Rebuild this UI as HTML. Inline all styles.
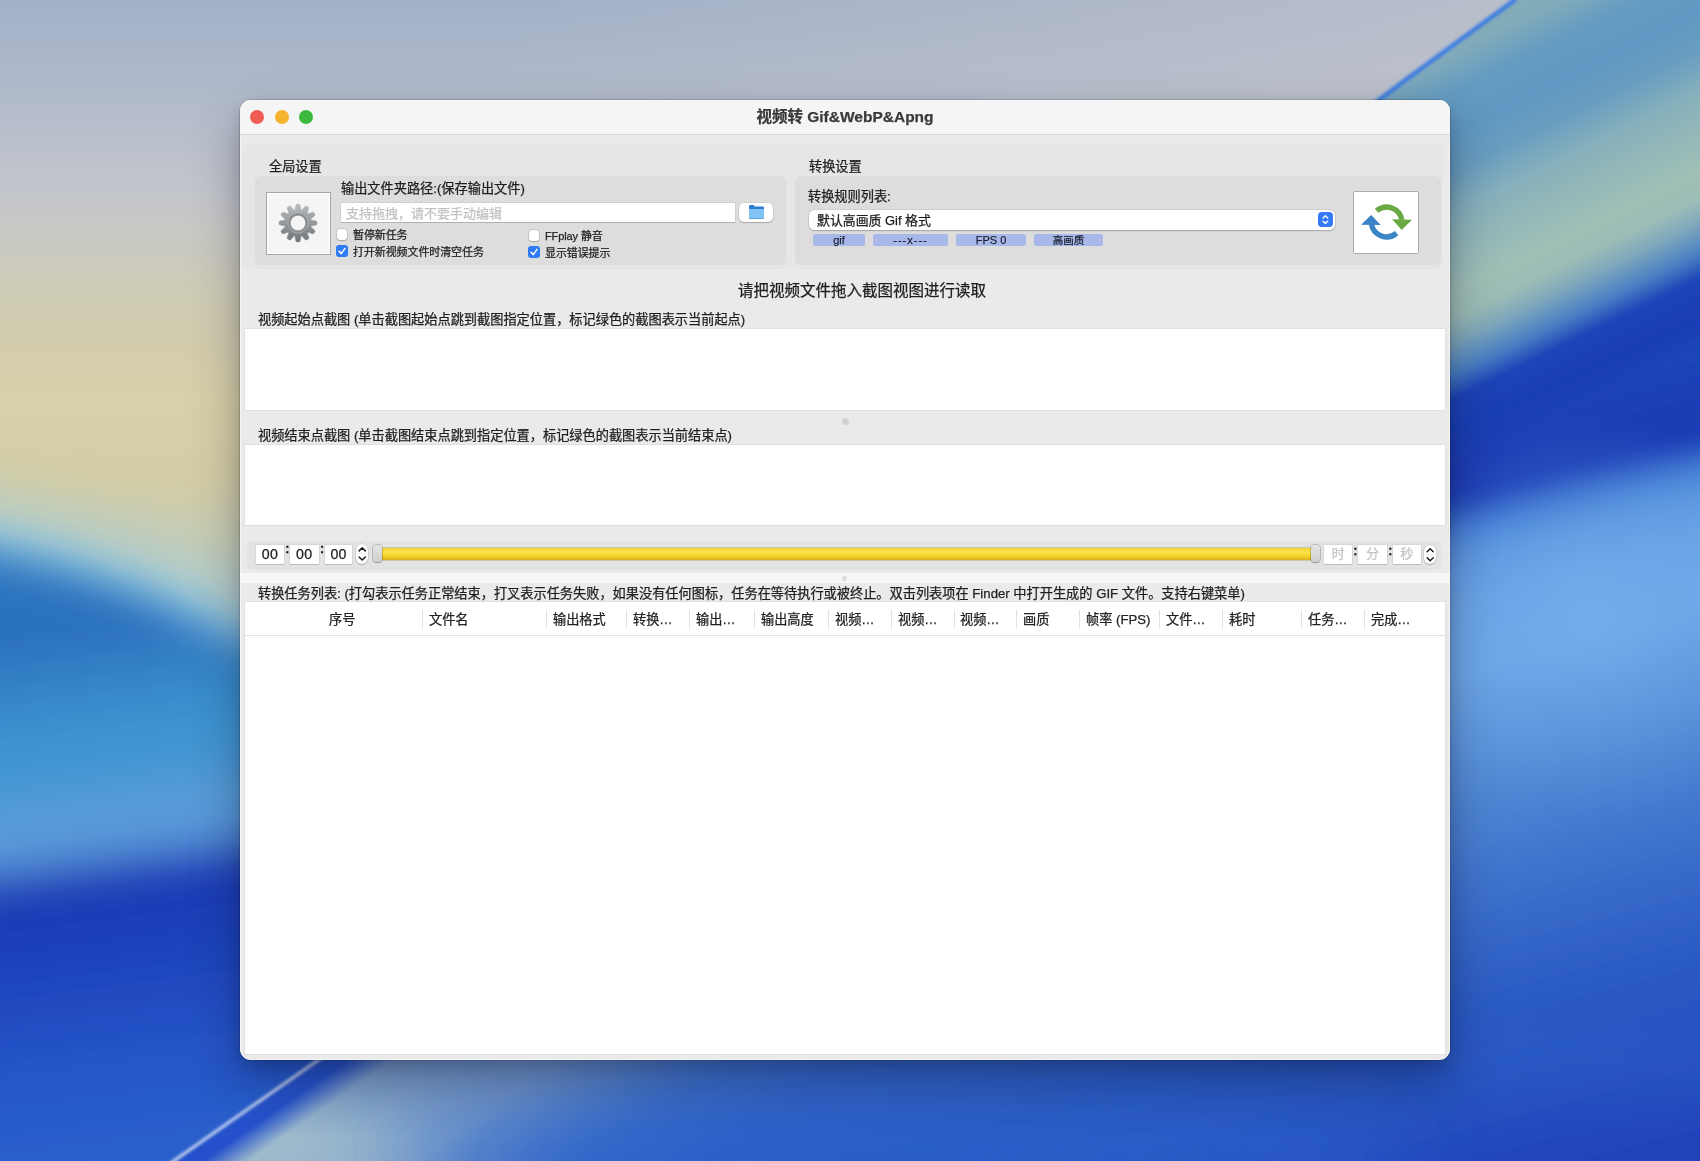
<!DOCTYPE html>
<html lang="zh-CN">
<head>
<meta charset="utf-8">
<title>视频转 Gif&amp;WebP&amp;Apng</title>
<style>
*{box-sizing:border-box;margin:0;padding:0}
html,body{width:1700px;height:1161px;overflow:hidden;background:#2a5cc8}
body{position:relative;font-family:"Liberation Sans","Noto Sans CJK SC",sans-serif;color:#1d1d1d;-webkit-font-smoothing:antialiased;-webkit-text-stroke:.25px}
#wall{position:absolute;left:0;top:0;width:1700px;height:1161px;display:block}
.abs{position:absolute}
#win{position:absolute;left:240px;top:100px;width:1210px;height:959.6px;border-radius:11px;background:#eaeaea;overflow:hidden;will-change:transform;
 box-shadow:inset 0 0 0 1px rgba(255,255,255,.5),0 0 0 .5px rgba(0,0,0,.28),0 22px 50px rgba(0,0,30,.32),0 6px 16px rgba(0,0,30,.14)}
#tbar{position:absolute;left:0;top:0;width:1210px;height:35px;background:#f5f5f5;border-bottom:1px solid #d9d9d9}
.tl{position:absolute;top:10px;width:14px;height:14px;border-radius:50%}
#title{position:absolute;left:0;top:0;width:1210px;height:35px;line-height:34px;text-align:center;font-size:15.5px;font-weight:bold;color:#3a3a3a}
.t13{position:absolute;font-size:13.2px;line-height:16px;margin-top:1.2px;white-space:nowrap;color:#1f1f1f}
.t11{position:absolute;font-size:11px;line-height:14px;margin-top:1px;letter-spacing:-.1px;white-space:nowrap;color:#1f1f1f}
.grp{position:absolute;border-radius:6px}
.cb{position:absolute;width:12px;height:12px;border-radius:3px;background:#fff;box-shadow:0 0 0 .5px rgba(0,0,0,.18),0 .5px 1px rgba(0,0,0,.18)}
.cb.on{background:#2f7bf6;box-shadow:none}
.cb svg{position:absolute;left:0;top:0}
.tag{position:absolute;top:134px;height:12px;border-radius:2px;background:#a8b8e8;font-size:11px;line-height:12px;text-align:center;color:#1c2236}
.white{position:absolute;background:#fff}
.tf{position:absolute;top:444.5px;height:19.5px;background:#fff;font-size:14.2px;line-height:18.4px;letter-spacing:.3px;text-align:center;color:#222;box-shadow:0 0 0 .5px rgba(0,0,0,.10),0 1px 0 rgba(0,0,0,.12)}
.tf.ph{color:#c4c4c4;font-size:13px}
.colon{position:absolute;top:439.5px;font-size:13.5px;line-height:18px;color:#111;-webkit-text-stroke:.7px #111}
.stp{position:absolute;top:444.2px;width:12.4px;height:19.4px;border-radius:6px;background:#fff;box-shadow:0 0 0 .5px rgba(0,0,0,.14),0 1px 1px rgba(0,0,0,.18)}
.knob{position:absolute;top:444.6px;width:9.6px;height:17px;border-radius:3px;background:linear-gradient(#e4e4e4,#cfcfcf);box-shadow:0 0 0 .5px rgba(0,0,0,.35),0 1px 1px rgba(0,0,0,.2)}
.th{position:absolute;top:511px;font-size:13.2px;line-height:18px;white-space:nowrap;color:#222}
.sep{position:absolute;top:510px;width:1px;height:19px;background:#e2e2e2}
</style>
</head>
<body>
<svg id="wall" width="1700" height="1161" viewBox="0 0 1700 1161">
<defs>
 <linearGradient id="sky" gradientUnits="userSpaceOnUse" x1="0" y1="0" x2="0" y2="600">
  <stop offset="0" stop-color="#a2b0c7"/>
  <stop offset=".17" stop-color="#b2bbcb"/>
  <stop offset=".33" stop-color="#c4c6cb"/>
  <stop offset=".42" stop-color="#cbcac0"/>
  <stop offset=".5" stop-color="#cfccb4"/>
  <stop offset=".58" stop-color="#d3cdad"/>
  <stop offset=".67" stop-color="#d8d0a8"/>
  <stop offset=".8" stop-color="#d3cda6"/>
  <stop offset="1" stop-color="#bccbc0"/>
 </linearGradient>
 <linearGradient id="skyx" gradientUnits="userSpaceOnUse" x1="500" y1="0" x2="1500" y2="0">
  <stop offset="0" stop-color="#c6c6cc" stop-opacity="0"/>
  <stop offset="1" stop-color="#c6c6cc" stop-opacity=".6"/>
 </linearGradient>
 <linearGradient id="lblue" gradientUnits="userSpaceOnUse" x1="0" y1="530" x2="82" y2="1161">
  <stop offset="0" stop-color="#2d76c0"/>
  <stop offset=".06" stop-color="#2d75bf"/>
  <stop offset=".18" stop-color="#2c70bd"/>
  <stop offset=".25" stop-color="#3483c8"/>
  <stop offset=".33" stop-color="#3c93d0"/>
  <stop offset=".40" stop-color="#4497d3"/>
  <stop offset=".45" stop-color="#589bd8"/>
  <stop offset=".50" stop-color="#5c9cda"/>
  <stop offset=".535" stop-color="#4a80d0"/>
  <stop offset=".562" stop-color="#1a3ab4"/>
  <stop offset=".63" stop-color="#1b3eb8"/>
  <stop offset=".745" stop-color="#2049c0"/>
  <stop offset=".84" stop-color="#2555c8"/>
  <stop offset="1" stop-color="#2a60cc"/>
 </linearGradient>
 <linearGradient id="sheetA" gradientUnits="userSpaceOnUse" x1="1450" y1="0" x2="1978" y2="1078">
  <stop offset="0" stop-color="#86aeb8"/>
  <stop offset=".04" stop-color="#82abb9"/>
  <stop offset=".07" stop-color="#659cc2"/>
  <stop offset=".10" stop-color="#5f98c2"/>
  <stop offset=".13" stop-color="#6a9ec0"/>
  <stop offset=".16" stop-color="#86b0bc"/>
  <stop offset=".19" stop-color="#94b8b8"/>
  <stop offset=".22" stop-color="#a0c0b6"/>
  <stop offset=".24" stop-color="#9cbcb6"/>
  <stop offset=".258" stop-color="#7fa8bc"/>
  <stop offset=".281" stop-color="#4a80c4"/>
  <stop offset=".30" stop-color="#1d44b8"/>
  <stop offset=".34" stop-color="#1a3cb4"/>
  <stop offset="1" stop-color="#1a3cb4"/>
 </linearGradient>
 <linearGradient id="sheetB" gradientUnits="userSpaceOnUse" x1="1450" y1="400" x2="1650" y2="1174">
  <stop offset="0" stop-color="#1f48bb"/>
  <stop offset=".06" stop-color="#1c40b6"/>
  <stop offset=".11" stop-color="#1a3ab4"/>
  <stop offset=".128" stop-color="#1d40b8"/>
  <stop offset=".158" stop-color="#3f78d2"/>
  <stop offset=".19" stop-color="#5a94de"/>
  <stop offset=".245" stop-color="#6aa4e6"/>
  <stop offset=".33" stop-color="#6ea8e7"/>
  <stop offset=".485" stop-color="#5088d4"/>
  <stop offset=".61" stop-color="#3c70cc"/>
  <stop offset=".735" stop-color="#2c5cc4"/>
  <stop offset=".86" stop-color="#2650c0"/>
  <stop offset=".97" stop-color="#2042ba"/>
 </linearGradient>
 <linearGradient id="band" gradientUnits="userSpaceOnUse" x1="174" y1="1161" x2="363" y2="1431">
  <stop offset="0" stop-color="#2450cc"/>
  <stop offset=".05" stop-color="#2450cc"/>
  <stop offset=".13" stop-color="#a2bdcc" stop-opacity=".95"/>
  <stop offset=".42" stop-color="#9bb8cc" stop-opacity=".92"/>
  <stop offset=".56" stop-color="#84a8cc" stop-opacity=".7"/>
  <stop offset=".72" stop-color="#6a96cc" stop-opacity=".28"/>
  <stop offset=".92" stop-color="#6a96cc" stop-opacity="0"/>
 </linearGradient>
 <linearGradient id="bandfade" gradientUnits="userSpaceOnUse" x1="0" y1="1000" x2="0" y2="1140">
  <stop offset="0" stop-color="#2d5ec6" stop-opacity="0"/>
  <stop offset=".42" stop-color="#2d5ec6" stop-opacity=".36"/>
  <stop offset="1" stop-color="#2d5ec6" stop-opacity="0"/>
 </linearGradient>
 <radialGradient id="glow" gradientUnits="userSpaceOnUse" cx="1590" cy="615" r="200">
  <stop offset="0" stop-color="#7ab0ec" stop-opacity=".6"/>
  <stop offset=".5" stop-color="#72aae8" stop-opacity=".25"/>
  <stop offset="1" stop-color="#6aa4e6" stop-opacity="0"/>
 </radialGradient>
 <filter id="b40" x="-30%" y="-30%" width="160%" height="160%"><feGaussianBlur stdDeviation="40"/></filter>
 <filter id="b35" x="-30%" y="-30%" width="160%" height="160%"><feGaussianBlur stdDeviation="34"/></filter>
 <filter id="b20" x="-30%" y="-30%" width="160%" height="160%"><feGaussianBlur stdDeviation="19"/></filter>
 <filter id="b10" x="-30%" y="-30%" width="160%" height="160%"><feGaussianBlur stdDeviation="10"/></filter>
 <filter id="b2" x="-10%" y="-10%" width="120%" height="120%"><feGaussianBlur stdDeviation="1.6"/></filter>
 <clipPath id="sheetclip"><path d="M174,1161 L318,1060 L1378,100 L1400,84 L1516,-1 L1700,-1 L1700,1161 Z"/></clipPath>
</defs>
<rect width="1700" height="1161" fill="url(#sky)"/>
<rect width="1700" height="420" fill="url(#skyx)"/>
<!-- glow above left blue mass -->
<path filter="url(#b35)" d="M-200,492 C-40,492 120,532 270,617 C420,702 600,707 900,627 L900,1400 L-200,1400 Z" fill="#a9ced6"/>
<path filter="url(#b20)" d="M-200,516 C-40,516 115,554 262,639 C412,724 600,727 900,650 L900,1400 L-200,1400 Z" fill="#84bfde"/>
<!-- left blue mass -->
<path filter="url(#b20)" d="M-200,534 C-40,534 110,571 260,656 C410,741 600,739 900,669 L900,1400 L-200,1400 Z" fill="url(#lblue)"/>
<!-- sheet -->
<g clip-path="url(#sheetclip)">
 <rect x="100" y="-50" width="1700" height="1300" fill="url(#sheetA)"/>
 <path filter="url(#b10)" d="M-100,900 L1100,560 L1450,445 L1700,335 L1900,250 L1900,1400 L-100,1400 Z" fill="url(#sheetB)"/>
 <rect x="1200" y="300" width="600" height="700" fill="url(#glow)"/>
 <rect x="100" y="1000" width="800" height="200" fill="url(#band)"/>
 <rect x="0" y="1000" width="1700" height="161" fill="url(#bandfade)"/>
 <ellipse filter="url(#b40)" cx="900" cy="1150" rx="520" ry="55" fill="#2b5ec8" opacity=".85"/>
</g>
<!-- sheet bright edge -->
<path filter="url(#b2)" d="M1358,116 L1400,84 L1516,-1" fill="none" stroke="#3d7de2" stroke-width="4.5"/>
<path filter="url(#b2)" d="M168,1165 L324,1056" fill="none" stroke="#c9d7f3" stroke-width="3"/>
</svg>

<div id="win">
 <div id="tbar"></div>
 <div class="tl" style="left:10.4px;background:#ee5c54"></div>
 <div class="tl" style="left:34.5px;background:#f5b32f"></div>
 <div class="tl" style="left:58.5px;background:#3db83f"></div>
 <div id="title">视频转 Gif&amp;WebP&amp;Apng</div>

 <!-- outer group -->
 <div class="grp" style="left:3px;top:45px;width:1200px;height:124px;background:#e6e6e6"></div>
 <div class="t13" style="left:29px;top:58px">全局设置</div>
 <div class="t13" style="left:569px;top:58px">转换设置</div>
 <div class="grp" style="left:15px;top:76px;width:531px;height:89px;background:#dddddd"></div>
 <div class="grp" style="left:555px;top:76px;width:646px;height:89px;background:#dddddd"></div>

 <!-- gear button -->
 <div class="abs" style="left:26px;top:92px;width:65px;height:63px;background:#f5f5f5;border:1px solid #a6a6a6;box-shadow:inset 0 0 0 1px #fff"></div>
 <svg class="abs" style="left:37.2px;top:102.1px" width="42" height="42" viewBox="-21 -21 42 42">
  <defs><linearGradient id="gg" gradientUnits="userSpaceOnUse" x1="0" y1="-20" x2="0" y2="20"><stop offset="0" stop-color="#bcbfc1"/><stop offset=".45" stop-color="#999c9f"/><stop offset="1" stop-color="#727578"/></linearGradient>
  <linearGradient id="gg2" gradientUnits="userSpaceOnUse" x1="0" y1="-11" x2="0" y2="11"><stop offset="0" stop-color="#8a8d90"/><stop offset="1" stop-color="#8d9093"/></linearGradient></defs>
  <path d="M-3.30,-12.00 L-2.10,-18.00 L-1.20,-19.00 L1.20,-19.00 L2.10,-18.00 L3.30,-12.00Z M3.14,-12.04 L7.18,-16.64 L8.46,-17.05 L10.54,-15.85 L10.82,-14.54 L8.86,-8.74Z M8.74,-8.86 L14.54,-10.82 L15.85,-10.54 L17.05,-8.46 L16.64,-7.18 L12.04,-3.14Z M12.00,-3.30 L18.00,-2.10 L19.00,-1.20 L19.00,1.20 L18.00,2.10 L12.00,3.30Z M12.04,3.14 L16.64,7.18 L17.05,8.46 L15.85,10.54 L14.54,10.82 L8.74,8.86Z M8.86,8.74 L10.82,14.54 L10.54,15.85 L8.46,17.05 L7.18,16.64 L3.14,12.04Z M3.30,12.00 L2.10,18.00 L1.20,19.00 L-1.20,19.00 L-2.10,18.00 L-3.30,12.00Z M-3.14,12.04 L-7.18,16.64 L-8.46,17.05 L-10.54,15.85 L-10.82,14.54 L-8.86,8.74Z M-8.74,8.86 L-14.54,10.82 L-15.85,10.54 L-17.05,8.46 L-16.64,7.18 L-12.04,3.14Z M-12.00,3.30 L-18.00,2.10 L-19.00,1.20 L-19.00,-1.20 L-18.00,-2.10 L-12.00,-3.30Z M-12.04,-3.14 L-16.64,-7.18 L-17.05,-8.46 L-15.85,-10.54 L-14.54,-10.82 L-8.74,-8.86Z M-8.86,-8.74 L-10.82,-14.54 L-10.54,-15.85 L-8.46,-17.05 L-7.18,-16.64 L-3.14,-12.04Z " fill="url(#gg)" stroke="url(#gg)" stroke-width=".5" stroke-linejoin="round"/>
  <circle r="13.3" fill="url(#gg)"/>
  <circle r="10.2" fill="url(#gg2)" stroke="#b9bcbe" stroke-width=".6"/>
  <circle r="7.7" fill="#f4f4f4" stroke="#7b7e81" stroke-width=".5"/>
 </svg>

 <div class="t13" style="left:101px;top:80px">输出文件夹路径:(保存输出文件)</div>
 <div class="abs" style="left:101px;top:103px;width:394px;height:19px;background:#fff;box-shadow:0 0 0 .5px rgba(0,0,0,.12),0 1px 0 rgba(0,0,0,.14)"></div>
 <div class="abs" style="left:106px;top:105px;font-size:13px;line-height:17px;color:#c2c2c2;white-space:nowrap">支持拖拽，请不要手动编辑</div>
 <!-- folder button -->
 <div class="abs" style="left:499px;top:103px;width:34px;height:19px;border-radius:5px;background:#fff;box-shadow:0 0 0 .5px rgba(0,0,0,.12),0 1px 1px rgba(0,0,0,.18)"></div>
 <svg class="abs" style="left:508.9px;top:105.1px" width="15" height="14.3" viewBox="0 0 15 14.3">
  <path d="M0,1.2 Q0,0 1.2,0 H4.6 L5.9,1.4 H13.8 Q15,1.4 15,2.6 V13.1 Q15,14.3 13.8,14.3 H1.2 Q0,14.3 0,13.1 Z" fill="#2b7ecf"/>
  <path d="M0,3.9 H15 V13.1 Q15,14.3 13.8,14.3 H1.2 Q0,14.3 0,13.1 Z" fill="#83c4f7"/>
  <path d="M0,12.9 H15 V13.1 Q15,14.3 13.8,14.3 H1.2 Q0,14.3 0,13.1 Z" fill="#5ea8e6"/>
 </svg>

 <!-- checkboxes -->
 <div class="cb" style="left:96.7px;top:129.4px;width:10.8px;height:10.8px"></div>
 <div class="t11" style="left:113px;top:127px">暂停新任务</div>
 <div class="cb on" style="left:96px;top:145px"><svg width="12" height="12" viewBox="0 0 12 12"><path d="M3 6.2 L5.2 8.6 L9 3.4" fill="none" stroke="#fff" stroke-width="1.5" stroke-linecap="round" stroke-linejoin="round"/></svg></div>
 <div class="t11" style="left:113px;top:144px">打开新视频文件时清空任务</div>
 <div class="cb" style="left:288.7px;top:130.4px;width:10.8px;height:10.8px"></div>
 <div class="t11" style="left:305px;top:128px">FFplay 静音</div>
 <div class="cb on" style="left:288px;top:146px"><svg width="12" height="12" viewBox="0 0 12 12"><path d="M3 6.2 L5.2 8.6 L9 3.4" fill="none" stroke="#fff" stroke-width="1.5" stroke-linecap="round" stroke-linejoin="round"/></svg></div>
 <div class="t11" style="left:305px;top:145px">显示错误提示</div>

 <!-- right group -->
 <div class="t13" style="left:568px;top:88px">转换规则列表:</div>
 <div class="abs" style="left:569px;top:109.7px;width:526.2px;height:20px;border-radius:5.5px;background:#fff;box-shadow:0 0 0 .5px rgba(0,0,0,.12),0 1px 1.5px rgba(0,0,0,.22)"></div>
 <div class="t13" style="left:577px;top:111px;line-height:17px;font-size:12.9px">默认高画质 Gif 格式</div>
 <div class="abs" style="left:1078px;top:112.3px;width:14.7px;height:14.9px;border-radius:3.8px;background:#3579f6"></div>
 <svg class="abs" style="left:1078px;top:112.3px" width="14.7" height="14.9" viewBox="0 0 14.7 14.9"><path d="M5.1 6 L7.4 3.8 L9.7 6 M5.1 9.2 L7.4 11.4 L9.7 9.2" fill="none" stroke="#fff" stroke-width="1.35" stroke-linecap="round" stroke-linejoin="round"/></svg>
 <div class="tag" style="left:573px;width:52px">gif</div>
 <div class="tag" style="left:633px;width:75px;letter-spacing:1px">---x---</div>
 <div class="tag" style="left:716px;width:70px">FPS 0</div>
 <div class="tag" style="left:794px;width:69px;font-size:10.5px">高画质</div>

 <!-- refresh button -->
 <div class="abs" style="left:1113px;top:91px;width:65.5px;height:62.5px;background:#fff;border:1px solid #aaa;border-radius:1.5px"></div>
 <svg class="abs" style="left:1106px;top:84px" width="80" height="76" viewBox="0 0 1222 1161">
  <path d="M467,410 A235 235 0 0 1 852,548" fill="none" stroke="#6aaa44" stroke-width="82"/>
  <path d="M705,540 L1010,548 L850,702 Z" fill="#6aaa44"/>
  <path d="M773,750 A235 235 0 0 1 388,612" fill="none" stroke="#3b84c6" stroke-width="82"/>
  <path d="M230,622 L530,628 L385,473 Z" fill="#3b84c6"/>
 </svg>

 <!-- hint -->
 <div class="abs" style="left:0;top:181px;width:1244px;text-align:center;font-size:15.5px;line-height:20px;color:#1f1f1f">请把视频文件拖入截图视图进行读取</div>

 <div class="t13" style="left:18px;top:211px">视频起始点截图 (单击截图起始点跳到截图指定位置，标记绿色的截图表示当前起点)</div>
 <div class="white" style="left:5px;top:229px;width:1200px;height:81px;box-shadow:0 0 0 .5px rgba(0,0,0,.08)"></div>
 <div class="abs" style="left:601.5px;top:317.5px;width:7px;height:7px;border-radius:50%;background:#d2d2d2"></div>
 <div class="t13" style="left:18px;top:327px">视频结束点截图 (单击截图结束点跳到指定位置，标记绿色的截图表示当前结束点)</div>
 <div class="white" style="left:5px;top:345px;width:1200px;height:80px;box-shadow:0 0 0 .5px rgba(0,0,0,.08)"></div>

 <!-- slider row -->
 <div class="grp" style="left:7px;top:441.2px;width:1194px;height:28.8px;background:#e3e3e3"></div>
 <div class="tf" style="left:16px;width:27.8px">00</div>
 <div class="colon" style="left:45.4px">:</div>
 <div class="tf" style="left:49.9px;width:28.7px">00</div>
 <div class="colon" style="left:80.2px">:</div>
 <div class="tf" style="left:84.7px;width:27.8px">00</div>
 <div class="stp" style="left:115.8px"></div>
 <svg class="abs" style="left:115.8px;top:444.2px" width="12.4" height="19.4" viewBox="0 0 12.4 19.4"><path d="M3.1 6.9 L6.2 3.9 L9.3 6.9 M3.1 13 L6.2 16 L9.3 13" fill="none" stroke="#1c1c1c" stroke-width="1.5" stroke-linecap="round" stroke-linejoin="round"/><path d="M.8 9.7 H11.6" stroke="#e4e4e4" stroke-width=".6"/></svg>
 <div class="abs" style="left:137px;top:448px;width:940px;height:12px;border-radius:3px;background:linear-gradient(#f2d436 0%,#fbe34a 35%,#f4cf2a 70%,#d9ae1c 100%);box-shadow:0 0 0 .5px rgba(150,120,0,.55)"></div>
 <div class="knob" style="left:132.7px"></div>
 <div class="knob" style="left:1070.6px"></div>
 <div class="tf ph" style="left:1084.4px;width:27.8px">时</div>
 <div class="colon" style="left:1113.5px;top:442px">:</div>
 <div class="tf ph" style="left:1118.2px;width:28.7px">分</div>
 <div class="colon" style="left:1148.4px;top:442px">:</div>
 <div class="tf ph" style="left:1153px;width:27.8px">秒</div>
 <div class="stp" style="left:1183.6px;top:445px;height:19px"></div>
 <svg class="abs" style="left:1183.6px;top:445px" width="12.4" height="19" viewBox="0 0 12.4 19.4"><path d="M3.1 6.9 L6.2 3.9 L9.3 6.9 M3.1 13 L6.2 16 L9.3 13" fill="none" stroke="#1c1c1c" stroke-width="1.5" stroke-linecap="round" stroke-linejoin="round"/><path d="M.8 9.7 H11.6" stroke="#e4e4e4" stroke-width=".6"/></svg>

 <!-- splitter -->
 <div class="abs" style="left:0;top:473.3px;width:1210px;height:10px;background:#f7f7f7"></div>
 <div class="abs" style="left:602px;top:475.5px;width:5px;height:5px;border-radius:50%;background:#dcdcdc"></div>

 <div class="t13" style="left:18px;top:484.8px">转换任务列表: (打勾表示任务正常结束，打叉表示任务失败，如果没有任何图标，任务在等待执行或被终止。双击列表项在 Finder 中打开生成的 GIF 文件。支持右键菜单)</div>

 <!-- table -->
 <div class="white" style="left:5px;top:502px;width:1200px;height:452px;box-shadow:0 0 0 .5px rgba(0,0,0,.08)"></div>
 <div class="abs" style="left:5px;top:535px;width:1200px;height:1px;background:#e3e3e3"></div>
 <div class="th" style="left:89px">序号</div>
 <div class="sep" style="left:182px"></div><div class="th" style="left:189px">文件名</div>
 <div class="sep" style="left:306px"></div><div class="th" style="left:313px">输出格式</div>
 <div class="sep" style="left:386px"></div><div class="th" style="left:393px">转换…</div>
 <div class="sep" style="left:449px"></div><div class="th" style="left:456px">输出…</div>
 <div class="sep" style="left:514px"></div><div class="th" style="left:521px">输出高度</div>
 <div class="sep" style="left:588px"></div><div class="th" style="left:595px">视频…</div>
 <div class="sep" style="left:651px"></div><div class="th" style="left:658px">视频…</div>
 <div class="sep" style="left:714px"></div><div class="th" style="left:720px">视频…</div>
 <div class="sep" style="left:776px"></div><div class="th" style="left:783px">画质</div>
 <div class="sep" style="left:839px"></div><div class="th" style="left:846px">帧率 (FPS)</div>
 <div class="sep" style="left:919px"></div><div class="th" style="left:926px">文件…</div>
 <div class="sep" style="left:982px"></div><div class="th" style="left:989px">耗时</div>
 <div class="sep" style="left:1061px"></div><div class="th" style="left:1068px">任务…</div>
 <div class="sep" style="left:1124px"></div><div class="th" style="left:1131px">完成…</div>
</div>
</body>
</html>
